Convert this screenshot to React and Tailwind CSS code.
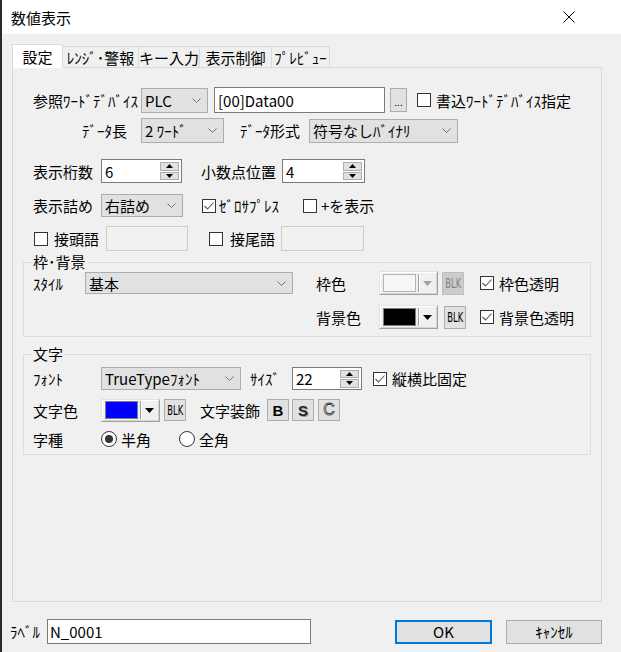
import React from 'react';

const FONT = "font-['Noto_Sans_CJK_JP','Noto_Sans',sans-serif]";

function Check({ checked }) {
  return (
    <span className="w-[14px] h-[14px] border border-[#333333] bg-white flex items-center justify-center shrink-0">
      {checked && (
        <svg width="12" height="12" viewBox="0 0 12 12">
          <path d="M1.5 6 L4.5 9 L10.5 2.5" fill="none" stroke="#555" strokeWidth="1.1" />
        </svg>
      )}
    </span>
  );
}

function Radio({ checked }) {
  return (
    <span className="w-[16px] h-[16px] rounded-full border border-[#333333] bg-white flex items-center justify-center shrink-0">
      {checked && <span className="w-[8px] h-[8px] rounded-full bg-[#333333]" />}
    </span>
  );
}

function Select({ value, cls }) {
  return (
    <div className={`flex items-center justify-between border border-[#adadad] bg-[#e1e1e1] pl-[3px] pr-[6px] shrink-0 ${cls}`}>
      <span className="leading-none whitespace-nowrap">{value}</span>
      <svg width="9" height="5" viewBox="0 0 9 5">
        <path d="M0.5 0.5 L4.5 4.5 L8.5 0.5" fill="none" stroke="#707070" strokeWidth="1" />
      </svg>
    </div>
  );
}

function Spinner({ value, cls }) {
  return (
    <div className={`flex items-center border border-[#7a7a7a] bg-white pl-[3px] pr-[2px] shrink-0 ${cls}`}>
      <span className="flex-1 leading-none">{value}</span>
      <div className="flex flex-col w-[19px] h-[18px] gap-px">
        <span className="flex-1 bg-[#e1e1e1] border border-[#adadad] flex items-center justify-center">
          <svg width="7" height="4" viewBox="0 0 7 4"><path d="M0 4 L3.5 0 L7 4 Z" fill="#000" /></svg>
        </span>
        <span className="flex-1 bg-[#e1e1e1] border border-[#adadad] flex items-center justify-center">
          <svg width="7" height="4" viewBox="0 0 7 4"><path d="M0 0 L7 0 L3.5 4 Z" fill="#000" /></svg>
        </span>
      </div>
    </div>
  );
}

function ColorBtn({ swatch, disabled, cls }) {
  return (
    <div className={`flex items-center border border-t-[#e3e3e3] border-l-[#e3e3e3] border-r-[#a0a0a0] border-b-[#a0a0a0] bg-[#f0f0f0] shadow-[inset_1px_1px_0_#ffffff,inset_-1px_-1px_0_#d4d4d4] pl-[3px] pr-[3px] gap-[2px] shrink-0 ${cls}`}>
      <span className={`flex-1 h-[18px] border ${swatch}`} />
      <span className="w-px h-[18px] bg-[#a0a0a0] shadow-[1px_0_0_#ffffff]" />
      <svg width="9" height="5" viewBox="0 0 9 5" className="mx-[2px]">
        <path d="M0 0 H9 L4.5 5 Z" fill={disabled ? '#a0a0a0' : '#000'} />
      </svg>
    </div>
  );
}

function Blk({ disabled, cls }) {
  return (
    <div className={`flex items-center justify-center border shrink-0 ${disabled ? 'border-[#bfbfbf] bg-[#cccccc] text-[#838383]' : 'border-[#adadad] bg-[#e1e1e1] text-black'} ${cls}`}>
      <span className="inline-block text-[14px] leading-none scale-x-[0.6] font-['DejaVu_Sans',sans-serif]">BLK</span>
    </div>
  );
}

export default function App() {
  const tabs = [
    { label: '設定', w: 'w-[51px]' },
    { label: 'ﾚﾝｼﾞ･警報', w: 'w-[76px]' },
    { label: 'キー入力', w: 'w-[61px]' },
    { label: '表示制御', w: 'w-[72px]' },
    { label: 'ﾌﾟﾚﾋﾞｭｰ', w: 'w-[58px]' },
  ];

  return (
    <div className={`w-[621px] h-[652px] bg-[#f0f0f0] border-l-2 border-[#2a2a2a] text-black text-[15px] overflow-hidden ${FONT}`}>
      {/* Title bar */}
      <div className="h-[34px] bg-white flex items-center justify-between pl-[9px] pr-[46px]">
        <span className="leading-none">数値表示</span>
        <svg width="12" height="12" viewBox="0 0 12 12">
          <path d="M0.5 0.5 L11.5 11.5 M11.5 0.5 L0.5 11.5" stroke="#000" strokeWidth="1" />
        </svg>
      </div>

      <div className="pl-[10px] pt-[10px]">
        {/* Tabs */}
        <div className="flex items-start h-[23px]">
          {tabs.map((t, i) =>
            i === 0 ? (
              <div key={t.label} className={`${t.w} h-[24px] relative z-10 bg-white border border-b-0 border-[#d9d9d9] flex items-center justify-center leading-none`}>
                {t.label}
              </div>
            ) : (
              <div key={t.label} className={`${t.w} h-[21px] mt-[2px] bg-[#f0f0f0] border-t border-r border-[#d9d9d9] flex items-center justify-center leading-none whitespace-nowrap`}>
                {t.label}
              </div>
            )
          )}
        </div>

        {/* Tab panel */}
        <div className="w-[590px] h-[535px] border border-[#d9d9d9] px-[10px] pt-[19px]">
          {/* Row 1 */}
          <div className="flex items-center h-[26px] pl-[10px]">
            <span className="w-[108px] leading-none whitespace-nowrap">参照ﾜｰﾄﾞﾃﾞﾊﾞｲｽ</span>
            <Select value="PLC" cls="w-[67px] h-[25px]" />
            <div className="ml-[6px] w-[171px] h-[26px] border border-[#7a7a7a] bg-white flex items-center pl-[3px] leading-none">[00]Data00</div>
            <div className="ml-[5px] w-[17px] h-[24px] border border-[#adadad] bg-[#e1e1e1] flex items-end justify-center pb-[4px] text-[10px] leading-none">...</div>
            <span className="ml-[10px]"><Check /></span>
            <span className="ml-[5px] leading-none whitespace-nowrap">書込ﾜｰﾄﾞﾃﾞﾊﾞｲｽ指定</span>
          </div>

          {/* Row 2 */}
          <div className="flex items-center h-[25px] mt-[5px] pl-[10px]">
            <span className="w-[108px] pl-[49px] leading-none whitespace-nowrap">ﾃﾞｰﾀ長</span>
            <Select value="2 ﾜｰﾄﾞ" cls="w-[83px] h-[25px]" />
            <span className="ml-[16px] w-[69px] leading-none whitespace-nowrap">ﾃﾞｰﾀ形式</span>
            <Select value="符号なしﾊﾞｲﾅﾘ" cls="w-[149px] h-[24px]" />
          </div>

          {/* Row 3 */}
          <div className="flex items-center h-[24px] mt-[16px] pl-[10px]">
            <span className="w-[68px] leading-none">表示桁数</span>
            <Spinner value="6" cls="w-[81px] h-[24px]" />
            <span className="ml-[19px] w-[81px] leading-none">小数点位置</span>
            <Spinner value="4" cls="w-[83px] h-[24px]" />
          </div>

          {/* Row 4 */}
          <div className="flex items-center h-[23px] mt-[11px] pl-[10px]">
            <span className="w-[68px] leading-none">表示詰め</span>
            <Select value="右詰め" cls="w-[82px] h-[23px]" />
            <span className="ml-[19px]"><Check checked /></span>
            <span className="ml-[3px] w-[84px] leading-none whitespace-nowrap">ｾﾞﾛｻﾌﾟﾚｽ</span>
            <Check />
            <span className="ml-[4px] leading-none">+を表示</span>
          </div>

          {/* Row 5 */}
          <div className="flex items-center h-[25px] mt-[9px] pl-[11px]">
            <Check />
            <span className="ml-[6px] w-[52px] leading-none">接頭語</span>
            <div className="w-[82px] h-[25px] border border-[#cccccc]" />
            <span className="ml-[21px]"><Check /></span>
            <span className="ml-[7px] w-[51px] leading-none">接尾語</span>
            <div className="w-[83px] h-[25px] border border-[#cccccc]" />
          </div>

          {/* 枠・背景 group */}
          <fieldset className="mt-[2px] border border-[#dcdcdc] pl-[9px] pb-[7px]">
            <legend className="-ml-px px-px leading-[18px]">枠･背景</legend>
            <div className="flex items-center h-[24px]">
              <span className="w-[52px] leading-none">ｽﾀｲﾙ</span>
              <Select value="基本" cls="w-[208px] h-[22px]" />
              <span className="ml-[23px] w-[63px] leading-none">枠色</span>
              <ColorBtn disabled swatch="border-[#b4b4b4] bg-[#f6f6f6]" cls="w-[59px] h-[24px]" />
              <Blk disabled cls="ml-[4px] w-[22px] h-[23px]" />
              <span className="ml-[16px]"><Check checked /></span>
              <span className="ml-[5px] leading-none">枠色透明</span>
            </div>
            <div className="flex items-center h-[24px] mt-[10px]">
              <span className="w-[283px]" />
              <span className="w-[63px] leading-none">背景色</span>
              <ColorBtn swatch="border-[#808080] bg-black" cls="w-[59px] h-[24px]" />
              <Blk cls="ml-[6px] w-[22px] h-[23px]" />
              <span className="ml-[14px]"><Check checked /></span>
              <span className="ml-[5px] leading-none">背景色透明</span>
            </div>
          </fieldset>

          {/* 文字 group */}
          <fieldset className="mt-[8px] border border-[#dcdcdc] pl-[9px] pb-[5px]">
            <legend className="-ml-px px-px leading-[18px]">文字</legend>
            <div className="flex items-center h-[23px] mt-[4px]">
              <span className="w-[68px] leading-none">ﾌｫﾝﾄ</span>
              <Select value="TrueTypeﾌｫﾝﾄ" cls="w-[140px] h-[23px]" />
              <span className="ml-[9px] w-[42px] leading-none">ｻｲｽﾞ</span>
              <Spinner value="22" cls="w-[70px] h-[23px]" />
              <span className="ml-[11px]"><Check checked /></span>
              <span className="ml-[5px] leading-none">縦横比固定</span>
            </div>
            <div className="flex items-center h-[22px] mt-[9px]">
              <span className="w-[68px] leading-none">文字色</span>
              <ColorBtn swatch="border-[#808080] bg-[#0000ff]" cls="w-[59px] h-[23px]" />
              <Blk cls="ml-[4px] w-[22px] h-[22px]" />
              <span className="ml-[14px] w-[67px] leading-none">文字装飾</span>
              <div className="w-[22px] h-[22px] border border-[#adadad] bg-[#e1e1e1] flex items-center justify-center font-['Liberation_Sans',sans-serif] font-bold text-[15px] leading-none">B</div>
              <div className="ml-[3px] w-[22px] h-[22px] border border-[#adadad] bg-[#e1e1e1] flex items-center justify-center font-['Liberation_Sans',sans-serif] font-bold text-[15px] leading-none text-[#222] [text-shadow:1px_1px_0_#9a9a9a]">S</div>
              <div className="ml-[4px] w-[22px] h-[22px] border border-[#adadad] bg-[#e1e1e1] flex items-center justify-center font-['Liberation_Sans',sans-serif] text-[16px] leading-none text-[#f4f4f4] [-webkit-text-stroke:0.8px_#333]">C</div>
            </div>
            <div className="flex items-center h-[20px] mt-[8px]">
              <span className="w-[68px] leading-none">字種</span>
              <Radio checked />
              <span className="ml-[4px] w-[58px] leading-none">半角</span>
              <Radio />
              <span className="ml-[4px] leading-none">全角</span>
            </div>
          </fieldset>
        </div>
      </div>

      {/* Bottom bar */}
      <div className="flex items-center h-[25px] mt-[17px] pl-[8px]">
        <span className="w-[37px] leading-none whitespace-nowrap">ﾗﾍﾞﾙ</span>
        <div className="w-[264px] h-[25px] border border-[#7a7a7a] bg-white flex items-center pl-[2px] leading-none">N_0001</div>
        <div className="ml-[84px] w-[97px] h-[24px] border-2 border-[#0078d7] bg-[#e1e1e1] flex items-center justify-center leading-none">OK</div>
        <div className="ml-[14px] w-[96px] h-[24px] border border-[#adadad] bg-[#e1e1e1] flex items-center justify-center leading-none">ｷｬﾝｾﾙ</div>
      </div>
    </div>
  );
}
